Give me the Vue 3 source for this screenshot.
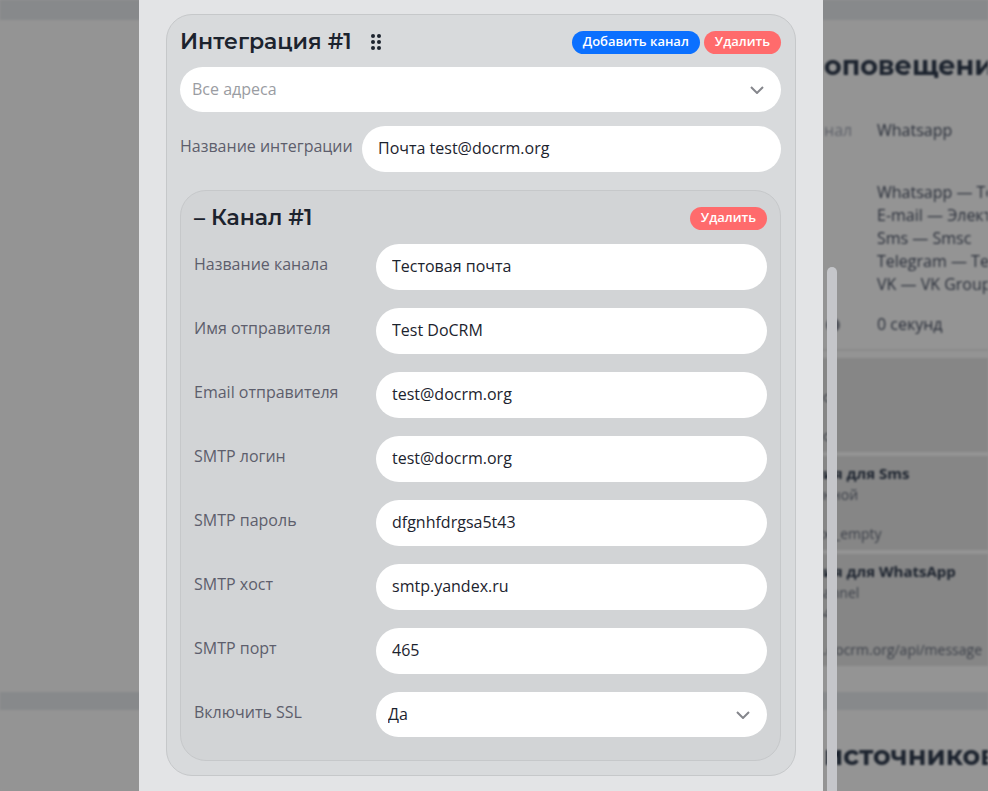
<script setup>
  /**
  * Integration settings dialog
  *
  * Shows the form of one mail integration with its channel, on top of
  * the dimmed notifications page.
  */

  import { ref } from 'vue';

  const address = ref('');
  const title = ref('Почта test@docrm.org');
  const ssl = ref('Да');

  const fields = ref([
    { id: 'channel-name', label: 'Название канала', value: 'Тестовая почта' },
    { id: 'sender-name', label: 'Имя отправителя', value: 'Test DoCRM' },
    { id: 'sender-email', label: 'Email отправителя', value: 'test@docrm.org' },
    { id: 'smtp-login', label: 'SMTP логин', value: 'test@docrm.org' },
    { id: 'smtp-password', label: 'SMTP пароль', value: 'dfgnhfdrgsa5t43' },
    { id: 'smtp-host', label: 'SMTP хост', value: 'smtp.yandex.ru' },
    { id: 'smtp-port', label: 'SMTP порт', value: '465' }
  ]);

  const channels = [
    'Whatsapp — Telegram',
    'E-mail — Электронная',
    'Sms — Smsc',
    'Telegram — Telegram',
    'VK — VK Group'
  ];
</script>

<template>
  <div class="screen">
    <!-- Page behind the dialog -->
    <div class="page">
      <section class="page-section">
        <h2 class="page-title">оповещений</h2>
        <div class="info-row">
          <span class="info-label">нал</span>
          <span>Whatsapp</span>
        </div>
        <div class="info-row info-list">
          <span></span>
          <div>
            <div v-for="channel in channels" :key="channel">{{ channel }}</div>
          </div>
        </div>
        <div class="info-row">
          <span class="info-dot"></span>
          <span>0 секунд</span>
        </div>
        <div class="blocks">
          <div class="block block-first">
            <p>с</p>
            <p class="block-last">с</p>
          </div>
          <div class="block">
            <h3>ия для Sms</h3>
            <p>нной</p>
            <p class="block-last">x:_empty</p>
          </div>
          <div class="block block-tall">
            <h3>ия для WhatsApp</h3>
            <p>annel</p>
            <p>4</p>
            <p class="block-last">.docrm.org/api/message</p>
          </div>
        </div>
      </section>
      <section class="page-section page-section-next">
        <h2 class="page-title">источников</h2>
      </section>
    </div>

    <!-- Dialog -->
    <div class="overlay">
      <main class="dialog">
        <div class="card card-outer">
          <div class="card-header">
            <h1 class="card-title">Интеграция #1</h1>
            <svg class="drag" viewBox="0 0 12 16" width="12" height="16">
              <circle v-for="n in 6" :key="n" :cx="n % 2 ? 3 : 9" :cy="Math.ceil(n / 2) * 6 - 4" r="2" />
            </svg>
            <div class="actions">
              <button type="button" class="btn btn-add">Добавить канал</button>
              <button type="button" class="btn btn-delete">Удалить</button>
            </div>
          </div>

          <div class="select-box">
            <select v-model="address" class="control select placeholder" aria-label="Все адреса">
              <option value="">Все адреса</option>
            </select>
            <svg class="chevron" viewBox="0 0 14 8" width="14" height="8">
              <path d="M1 1l6 6 6-6" />
            </svg>
          </div>

          <div class="field field-title">
            <label for="title">Название интеграции</label>
            <input id="title" v-model="title" class="control" type="text">
          </div>

          <div class="card card-inner">
            <div class="card-header">
              <h2 class="card-title">– Канал #1</h2>
              <div class="actions">
                <button type="button" class="btn btn-delete">Удалить</button>
              </div>
            </div>

            <div class="fields">
              <div v-for="field in fields" :key="field.id" class="field">
                <label :for="field.id">{{ field.label }}</label>
                <input :id="field.id" v-model="field.value" class="control" type="text">
              </div>
              <div class="field">
                <label for="ssl">Включить SSL</label>
                <div class="select-box">
                  <select id="ssl" v-model="ssl" class="control select">
                    <option>Да</option>
                    <option>Нет</option>
                  </select>
                  <svg class="chevron" viewBox="0 0 14 8" width="14" height="8">
                    <path d="M1 1l6 6 6-6" />
                  </svg>
                </div>
              </div>
            </div>
          </div>
        </div>
      </main>
      <div class="scroll-thumb"></div>
    </div>
  </div>
</template>

<style>
  body {
    margin: 0;
    background: #949494;
  }
</style>

<style scoped>
  .screen {
    position: relative;
    min-height: 100vh;
    overflow: hidden;
    font-family: "Open Sans", "Noto Sans", sans-serif;
    font-size: 16px;
    color: #1c232e;
  }

  h1, h2, h3, p {
    margin: 0;
  }

  /* Page behind */
  .page {
    position: absolute;
    inset: 0;
    overflow: hidden;
    background: #87898b;
    filter: blur(1px);
    font-size: 16px;
    line-height: 23px;
    color: #2b303b;
    white-space: nowrap;
  }

  .page-section {
    margin-top: 20px;
    padding: 26px 0 26px calc(100% - 164px);
    background: #949494;
  }

  .page-section-next {
    height: 120px;
    margin-top: 18px;
  }

  .page-title {
    font-family: Montserrat, Inter, sans-serif;
    font-weight: 700;
    font-size: 27px;
    line-height: 40px;
    color: #1c232e;
  }

  .info-row {
    display: grid;
    grid-template-columns: 53px 1fr;
    align-items: center;
    margin-top: 17px;
  }

  .page-title + .info-row {
    margin-top: 33px;
  }

  .info-list {
    margin-top: 39px;
  }

  .info-label {
    color: #5f626a;
  }

  .info-dot {
    width: 14px;
    height: 14px;
    margin-left: 2px;
    border-radius: 50%;
    background: #50535b;
  }

  .blocks {
    display: flex;
    flex-direction: column;
    gap: 4px;
    margin-top: 13px;
    margin-left: -30px;
    padding-top: 7px;
    border-top: 2px solid #8a8a8a;
  }

  .block {
    display: flex;
    flex-direction: column;
    box-sizing: border-box;
    height: 94px;
    padding: 7px 0 6px 29px;
    background: #868686;
    font-size: 14px;
    line-height: 21px;
    color: #3c4049;
  }

  .block-first {
    padding-top: 28px;
  }

  .block-tall {
    height: 112px;
  }

  .block h3 {
    font-weight: 700;
    font-size: 15px;
    color: #1c232e;
  }

  .block-last {
    margin-top: auto;
  }

  /* Dialog */
  .overlay {
    position: relative;
    padding: 0 165px 0 139px;
  }

  .dialog {
    box-sizing: border-box;
    min-height: 100vh;
    padding: 14px 27px;
    background: #e3e4e6;
  }

  .scroll-thumb {
    position: absolute;
    top: 267px;
    right: 151px;
    bottom: -10px;
    width: 10px;
    border-radius: 5px;
    background: #c5c6ca;
  }

  .card {
    padding: 13px;
    border: 1px solid #c6c8ca;
    border-radius: 26px;
    background: #d8dadc;
  }

  .card-outer {
    padding: 13px 14px 14px 13px;
  }

  .card-inner {
    margin-top: 18px;
    padding-bottom: 23px;
    background: #d2d4d6;
  }

  .card-header {
    display: flex;
    align-items: center;
    height: 28px;
    margin-bottom: 11px;
  }

  .card-inner .card-header {
    margin-bottom: 12px;
  }

  .card-title {
    font-family: Montserrat, Inter, sans-serif;
    font-weight: 600;
    font-size: 22px;
    line-height: 28px;
  }

  .drag {
    margin-left: 18px;
    fill: #1c232e;
  }

  .actions {
    display: flex;
    gap: 4px;
    margin-left: auto;
  }

  .btn {
    height: 23px;
    padding: 0 11px 2px;
    border: 0;
    border-radius: 12px;
    font-family: inherit;
    font-weight: 600;
    font-size: 13px;
    line-height: 21px;
    color: #ffffff;
  }

  .btn-add {
    background: #0b70ff;
  }

  .btn-delete {
    background: #ff6b6c;
  }

  .control {
    box-sizing: border-box;
    width: 100%;
    height: 46px;
    padding: 0 16px 2px;
    border: 0;
    border-radius: 23px;
    background: #ffffff;
    font-family: inherit;
    font-size: 16px;
    color: #1c232e;
  }

  .select-box {
    position: relative;
    display: flex;
  }

  .select {
    appearance: none;
    height: 45px;
    padding: 0 40px 2px 12px;
  }

  .placeholder {
    color: #9a9ca2;
  }

  .chevron {
    position: absolute;
    top: 19px;
    right: 17px;
    fill: none;
    stroke: #85868c;
    stroke-width: 2;
    pointer-events: none;
  }

  .field {
    display: grid;
    grid-template-columns: 182px 1fr;
    align-items: center;
  }

  .field-title {
    margin-top: 14px;
  }

  .field label {
    padding-bottom: 6px;
    color: #5d5e6c;
  }

  .fields {
    display: flex;
    flex-direction: column;
    gap: 18px;
  }
</style>
